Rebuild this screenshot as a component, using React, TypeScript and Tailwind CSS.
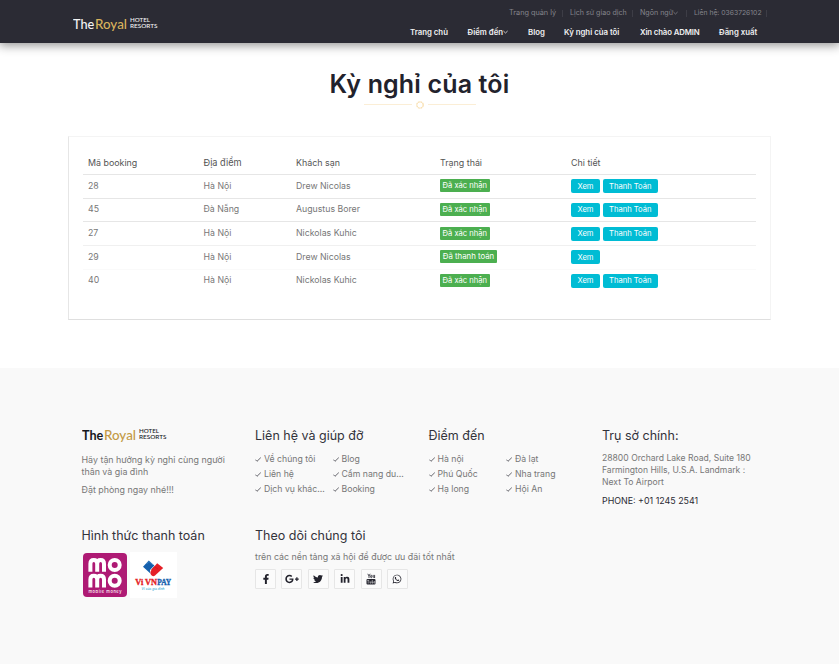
import type { ReactNode } from 'react';
import { FaFacebookF, FaGooglePlusG, FaTwitter, FaLinkedinIn, FaWhatsapp } from 'react-icons/fa';

function Logo({ dark = false }: { dark?: boolean }) {
  const ink = dark ? '#17171c' : '#f4f4f4';
  const gold = dark ? '#c39a45' : '#d9b25c';
  return (
    <svg width="86" height="20" viewBox="0 -2 86 20" fontFamily="Lato, sans-serif" className="block">
      <text x="0" y="13" fontSize="14" fontWeight={dark ? 700 : 500} fill={ink} textLength="21.3" lengthAdjust="spacingAndGlyphs">The</text>
      <text x="22" y="13" fontSize="14" fontWeight="500" fill={gold} textLength="32" lengthAdjust="spacingAndGlyphs">Royal</text>
      <text x="57" y="6" fontSize="5.6" fontWeight="500" fill={ink} textLength="20" lengthAdjust="spacingAndGlyphs">HOTEL</text>
      <text x="57" y="12.3" fontSize="5.6" fontWeight="500" fill={ink} textLength="27.5" lengthAdjust="spacingAndGlyphs">RESORTS</text>
    </svg>
  );
}

function Chevron() {
  return (
    <svg width="5" height="4" viewBox="0 0 5 4" className="shrink-0" fill="none" stroke="currentColor" strokeWidth="0.8">
      <path d="M0.4 1 L2.5 3 L4.6 1" />
    </svg>
  );
}

function Divider({ className }: { className: string }) {
  return <span className={`h-[7px] w-px shrink-0 bg-[#3d3d46] ${className}`} />;
}

function TopBar() {
  return (
    <div className="flex h-[8px] items-center justify-end text-[7.1px] leading-[8px] text-[#85858c]">
      <div className="w-[47px] text-[7.3px]">Trang quản lý</div>
      <Divider className="ml-[6px] mr-[7px]" />
      <div className="w-[56px]">Lịch sử giao dịch</div>
      <Divider className="ml-[6px] mr-[7px]" />
      <div className="flex w-[40px] items-center">Ngôn ngữ<Chevron /></div>
      <Divider className="ml-[6px] mr-[7px]" />
      <div className="w-[66px] text-[6.8px]">Liên hệ: 0363726102</div>
      <Divider className="ml-[6px]" />
    </div>
  );
}

function NavBar() {
  return (
    <nav className="mt-[10px] flex h-[10px] items-center text-[7.8px] font-semibold leading-[10px] text-[#f0f0f1]">
      <div className="w-[57.5px]">Trang chủ</div>
      <div className="flex w-[60.5px] items-center">Điểm đến<Chevron /></div>
      <div className="w-[36px]">Blog</div>
      <div className="w-[76px]">Kỳ nghỉ của tôi</div>
      <div className="w-[79px] tracking-[-0.14px]">Xin chào ADMIN</div>
      <div>Đăng xuất</div>
    </nav>
  );
}

const columns = 'grid grid-cols-[115.5px_92.5px_144px_131px_1fr] pl-[5px]';

const bookings = [
  { id: 28, place: 'Hà Nội', hotel: 'Drew Nicolas', paid: false },
  { id: 45, place: 'Đà Nẵng', hotel: 'Augustus Borer', paid: false },
  { id: 27, place: 'Hà Nội', hotel: 'Nickolas Kuhic', paid: false },
  { id: 29, place: 'Hà Nội', hotel: 'Drew Nicolas', paid: true },
  { id: 40, place: 'Hà Nội', hotel: 'Nickolas Kuhic', paid: false },
];

const rowBorders = ['border-[#e6e6e6]', 'border-[#e6e6e6]', 'border-[#e6e6e6]', 'border-[#f0f0f0]', 'border-[#fafafa]'];

function BookingTable() {
  return (
    <section className="mx-auto mt-[27px] h-[184px] w-[703px] border border-[#f4f4f4] border-b-[#dfdfdf] border-l-[#e6e6e6] px-[14px] pt-[20px]">
      <div className={`${columns} h-[17px] text-[8.9px] leading-[12px] text-[#555]`}>
        <div>Mã booking</div>
        <div className="text-[9.2px]">Địa điểm</div>
        <div>Khách sạn</div>
        <div>Trạng thái</div>
        <div>Chi tiết</div>
      </div>
      {bookings.map((b, i) => (
        <div key={b.id} className={`${columns} h-[23.65px] items-center border-t ${rowBorders[i]} text-[8.75px] leading-[11px] text-[#777]`}>
          <div>{b.id}</div>
          <div>{b.place}</div>
          <div>{b.hotel}</div>
          <div className="flex pb-px">
            <span className={`flex h-[13px] items-center justify-center rounded-[1px] bg-[#4caf50] text-white ${b.paid ? 'w-[57px] text-[7.8px]' : 'w-[49.5px] text-[7.6px]'}`}>
              {b.paid ? 'Đã thanh toán' : 'Đã xác nhận'}
            </span>
          </div>
          <div className="flex gap-[2.5px] text-[7.6px] text-white">
            <span className="flex h-[14px] w-[29px] items-center justify-center rounded-[2px] bg-[#00bcd4]">Xem</span>
            {!b.paid && <span className="flex h-[14px] w-[55.5px] items-center justify-center rounded-[2px] bg-[#00bcd4]">Thanh Toán</span>}
          </div>
        </div>
      ))}
    </section>
  );
}

function FooterHeading({ children }: { children: ReactNode }) {
  return <h3 className="text-[12.5px] font-normal leading-[16px] text-[#33333b]">{children}</h3>;
}

function CheckList({ items }: { items: string[] }) {
  return (
    <ul className="mt-[7.5px] grid grid-cols-[77.5px_1fr] text-[8.7px] leading-[15px] text-[#777]">
      {items.map((item) => (
        <li key={item} className="flex items-center">
          <svg width="6" height="5" viewBox="0 0 6 5" className="mr-[3px] shrink-0" fill="none" stroke="#55555c" strokeWidth="0.9">
            <path d="M0.3 2.6 L2 4.3 L5.8 0.6" />
          </svg>
          {item}
        </li>
      ))}
    </ul>
  );
}

function YoutubeIcon() {
  return (
    <svg width="10" height="12" viewBox="0 0 10 12" fill="none" stroke="#22222c" strokeWidth="0.8">
      <path d="M1.8 0.8 L3 3 L4.2 0.8 M3 3 V5" />
      <rect x="4.7" y="2.3" width="1.2" height="2.4" rx="0.6" />
      <path d="M7.2 1.9 V4.1 Q7.2 4.7 8.5 4.2 M8.6 1.9 V5" />
      <rect x="0.5" y="6" width="9" height="5.5" rx="1" fill="#22222c" stroke="none" />
      <path d="M1.2 7.4 H3.2 M2.2 7.4 V10.5 M4 8.3 V10.1 H5.1 V8.3 M6.3 7 V10.2 H7 V8.6 M8.9 10.1 H8.1 V8.6 H8.8 V9.3" stroke="#f9f9f9" strokeWidth="0.5" />
    </svg>
  );
}

function SocialButton({ children }: { children: ReactNode }) {
  return (
    <span className="flex h-[20px] w-[21px] items-center justify-center rounded-[1px] border border-[#e6e6e6] bg-[#fbfbfb] text-[10px] text-[#22222c]">
      {children}
    </span>
  );
}

function MomoLogo() {
  return (
    <svg width="44" height="44" viewBox="0 0 44 44" className="block">
      <rect width="44" height="44" rx="4" fill="#ae1a74" />
      <g fill="none" stroke="#fff" strokeWidth="4">
        <path d="M7.4 18.8 V10.8 Q7.4 7 10.7 7 Q14.2 7 14.2 10.8 V18.8 M14.2 10.8 Q14.2 7 17.6 7 Q21 7 21 10.8 V18.8" />
        <circle cx="31.7" cy="12" r="5" />
        <path d="M7.4 34.6 V26.6 Q7.4 22.8 10.7 22.8 Q14.2 22.8 14.2 26.6 V34.6 M14.2 26.6 Q14.2 22.8 17.6 22.8 Q21 22.8 21 26.6 V34.6" />
        <circle cx="31.7" cy="27.8" r="5" />
      </g>
      <text x="5.5" y="40" fontFamily="Inter, sans-serif" fontSize="4" fontWeight="500" fill="#fff" textLength="33" lengthAdjust="spacing">mobile money</text>
    </svg>
  );
}

function VnpayLogo() {
  return (
    <svg width="47" height="46" viewBox="0 0 47 46" className="block bg-white">
      <path d="M13 14.8 L18.8 8.6 L24.4 13.6 L20.4 17.6 Q19 20 21.5 22.6 Z" fill="#1560ad" />
      <path d="M27.2 11.3 L33.2 16 L25 23.6 Q22.6 25.2 20.8 22.6 Q19.6 20 21.6 17.6 Z" fill="#e51f27" />
      <path d="M21.6 17.6 L24.4 14.6 L28 17" fill="none" stroke="#c9151d" strokeWidth="0.7" />
      <path d="M16.5 12 L19 9.4 L23 13" fill="none" stroke="#4e91cd" strokeWidth="0.8" />
      <g fontFamily="Liberation Serif, serif" fontWeight="700" fontSize="8.4" strokeWidth="0.35">
        <text x="5.3" y="33" fill="#e51f27" stroke="#e51f27" textLength="8" lengthAdjust="spacingAndGlyphs">Vi</text>
        <text x="15" y="33" fill="#e51f27" stroke="#e51f27" textLength="12" lengthAdjust="spacingAndGlyphs">VN</text>
        <text x="27.2" y="33" fill="#1560ad" stroke="#1560ad" textLength="14" lengthAdjust="spacingAndGlyphs">PAY</text>
      </g>
      <text x="11.5" y="38" fontFamily="Liberation Sans, sans-serif" fontStyle="italic" fontSize="3.2" fill="#21a0cf" textLength="23" lengthAdjust="spacingAndGlyphs">Ví của gia đình</text>
    </svg>
  );
}

function Footer() {
  return (
    <footer className="h-[296px] bg-[#f9f9f9] pl-[81.5px] pt-[60px]">
      <div className="grid h-[100px] grid-cols-[173.5px_173.5px_173.5px_1fr]">
        <div className="text-[8.9px] leading-[12px] text-[#777]">
          <div className="-mt-[3px]"><Logo dark /></div>
          <p className="mt-[9px]">Hãy tận hưởng kỳ nghỉ cùng người<br />thân và gia đình</p>
          <p className="mt-[6px]">Đặt phòng ngay nhé!!!</p>
        </div>
        <div>
          <FooterHeading>Liên hệ và giúp đỡ</FooterHeading>
          <CheckList items={['Về chúng tôi', 'Blog', 'Liên hệ', 'Cẩm nang du...', 'Dịch vụ khác...', 'Booking']} />
        </div>
        <div>
          <FooterHeading>Điểm đến</FooterHeading>
          <CheckList items={['Hà nội', 'Đà lạt', 'Phú Quốc', 'Nha trang', 'Hạ long', 'Hội An']} />
        </div>
        <div className="text-[8.6px] leading-[12px] text-[#777]">
          <FooterHeading>Trụ sở chính:</FooterHeading>
          <p className="mt-[8px]">28800 Orchard Lake Road, Suite 180<br />Farmington Hills, U.S.A. Landmark :<br />Next To Airport</p>
          <p className="mt-[7px] text-[8.9px] text-[#2b2b34]">PHONE: +01 1245 2541</p>
        </div>
      </div>
      <div className="grid grid-cols-[173.5px_1fr]">
        <div>
          <FooterHeading>Hình thức thanh toán</FooterHeading>
          <div className="mt-[8px] flex items-center gap-[3px] pl-[1.5px]">
            <MomoLogo />
            <VnpayLogo />
          </div>
        </div>
        <div>
          <FooterHeading>Theo dõi chúng tôi</FooterHeading>
          <p className="mt-[7px] text-[8.85px] leading-[12px] text-[#777]">trên các nền tảng xã hội để được ưu đãi tốt nhất</p>
          <div className="mt-[6px] flex gap-[5.4px]">
            <SocialButton><FaFacebookF /></SocialButton>
            <SocialButton><FaGooglePlusG className="text-[14px]" /></SocialButton>
            <SocialButton><FaTwitter /></SocialButton>
            <SocialButton><FaLinkedinIn /></SocialButton>
            <SocialButton><YoutubeIcon /></SocialButton>
            <SocialButton><FaWhatsapp /></SocialButton>
          </div>
        </div>
      </div>
    </footer>
  );
}

export default function App() {
  return (
    <div className="h-[664px] w-[839px] overflow-hidden whitespace-nowrap bg-white font-['Inter','Noto_Sans',sans-serif]">
      <header className="flex h-[43px] justify-between bg-[#2b2b34] pl-[73px] pr-[72px] shadow-[0_1px_10px_1px_rgba(0,0,0,0.45)]">
        <div className="pt-[14px]"><Logo /></div>
        <div className="w-[357px] pt-[9px]">
          <TopBar />
          <NavBar />
        </div>
      </header>
      <main className="h-[325px] pt-[25px]">
        <h1 className="text-center text-[25px] font-semibold leading-[32px] tracking-[0.15px] text-[#22222c]">Kỳ nghỉ của tôi</h1>
        <div className="flex h-[9px] items-center justify-center gap-[4px]">
          <span className="h-[1.5px] w-[48px] bg-[#fbeed6]" />
          <svg width="8" height="8" viewBox="0 0 8 8" fill="none" stroke="#f8dfb0" strokeWidth="1.3">
            <circle cx="4" cy="4" r="3.2" strokeDasharray="2 0.5" />
          </svg>
          <span className="h-[1.5px] w-[48px] bg-[#fbeed6]" />
        </div>
        <BookingTable />
      </main>
      <Footer />
    </div>
  );
}
